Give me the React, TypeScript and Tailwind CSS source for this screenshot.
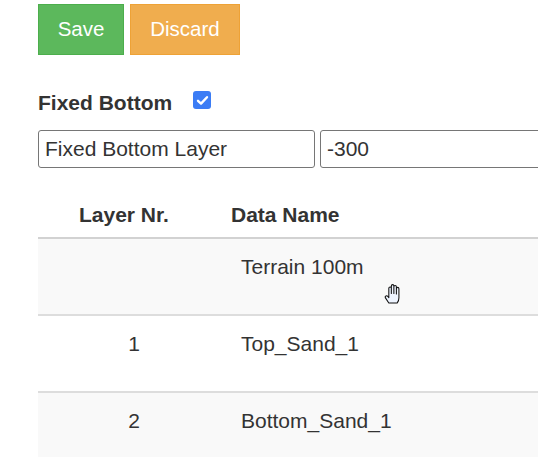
import React from "react";

const rows = [
  { nr: "", name: "Terrain 100m", striped: true, cursor: true },
  { nr: "1", name: "Top_Sand_1", striped: false, cursor: false },
  { nr: "2", name: "Bottom_Sand_1", striped: true, cursor: false },
];

function HandCursor() {
  return (
    <svg
      className="absolute left-[154px] top-[29px]"
      width="17"
      height="20"
      viewBox="0 0 16 19"
    >
      <path
        d="M4.5 18 L1.3 13.2 Q0.6 11.8 1.8 11.3 Q2.8 10.9 3.8 12.1 L4.5 13 L4.5 4 Q4.5 2.8 5.7 2.8 Q6.9 2.8 6.9 4 L6.9 9 L6.9 1.8 Q6.9 0.6 8.1 0.6 Q9.3 0.6 9.3 1.8 L9.3 9 L9.3 2.6 Q9.3 1.4 10.5 1.4 Q11.7 1.4 11.7 2.6 L11.7 9.5 L11.7 4.4 Q11.7 3.2 12.9 3.2 Q14.1 3.2 14.1 4.4 L14.1 13 Q14.1 16 12.5 18 Z"
        fill="#eef4ff"
        stroke="#111"
        strokeWidth="1"
        strokeLinejoin="round"
      />
    </svg>
  );
}

export default function App() {
  return (
    <div
      className="h-[457px] w-full overflow-hidden bg-white text-[#333]"
      style={{ fontFamily: '"Liberation Sans", Arial, sans-serif' }}
    >
      <div className="pl-[38px] pt-[4px]">
        <div className="flex gap-[6px]">
          <button className="h-[51px] w-[86px] border border-[#4cae4c] bg-[#5cb85c] text-[20.5px] text-white">
            Save
          </button>
          <button className="h-[51px] w-[110px] border border-[#eea236] bg-[#f0ad4e] text-[20.5px] text-white">
            Discard
          </button>
        </div>

        <div className="mt-[36px] flex h-[18px] items-center">
          <span className="relative top-[3px] text-[21px] font-bold leading-[24px]">Fixed Bottom</span>
          <span className="ml-[21px] flex h-[18px] w-[18px] items-center justify-center rounded-[3px] bg-[#3b7cf5]">
            <svg width="13" height="13" viewBox="0 0 13 13">
              <polyline
                points="2,6.8 5,9.6 11,3.2"
                fill="none"
                stroke="white"
                strokeWidth="2.4"
                strokeLinecap="round"
                strokeLinejoin="round"
              />
            </svg>
          </span>
        </div>

        <div className="mt-[21px] flex gap-[5px]">
          <div className="flex h-[38px] w-[277px] shrink-0 items-center rounded-[3px] border border-[#767676] pl-[6px] text-[21px]">
            Fixed Bottom Layer
          </div>
          <div className="flex h-[38px] w-[300px] shrink-0 items-center rounded-[3px] border border-[#767676] pl-[6px] text-[21px]">
            -300
          </div>
        </div>

        <div className="mt-[35px] w-[620px]">
          <div className="flex border-b-2 border-[#d2d2d2] pb-[10px] text-[21px] font-bold leading-[24px]">
            <div className="w-[192px] shrink-0 pl-[41px]">Layer Nr.</div>
            <div className="pl-[1px]">Data Name</div>
          </div>
          {rows.map((r, i) => (
            <div
              key={i}
              className={`flex h-[77px] border-b-2 border-[#dddddd] pt-[16px] text-[21px] leading-[24px] ${
                r.striped ? "bg-[#f9f9f9]" : "bg-white"
              }`}
            >
              <div className="w-[192px] shrink-0 text-center">{r.nr}</div>
              <div className="relative pl-[11px]">
                {r.name}
                {r.cursor && <HandCursor />}
              </div>
            </div>
          ))}
        </div>
      </div>
    </div>
  );
}
